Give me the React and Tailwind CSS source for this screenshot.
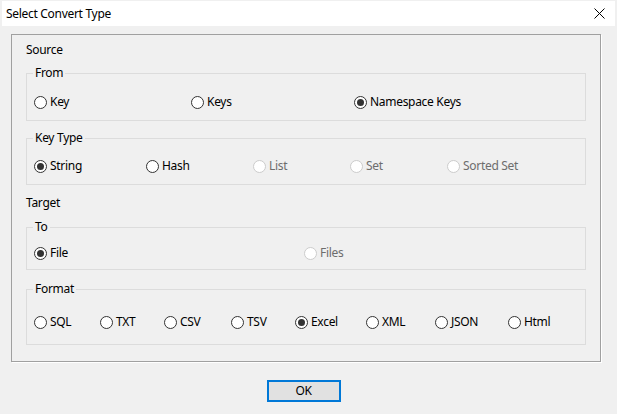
import { useState } from 'react'

const font = { fontFamily: '"Noto Sans", "Liberation Sans", sans-serif' }

function Radio({ label, checked, disabled, width, onSelect }) {
  return (
    <label
      className={`flex items-center h-4 shrink-0 ${disabled ? 'text-[#6d6d6d]' : 'text-black'}`}
      style={width ? { width } : undefined}
      onClick={() => !disabled && onSelect && onSelect()}
    >
      <span
        className={`flex items-center justify-center w-[13px] h-[13px] rounded-full border bg-white ${
          disabled ? 'border-[#cccccc]' : 'border-[#333333]'
        }`}
      >
        {checked && <span className="block w-[7px] h-[7px] rounded-full bg-[#333333]" />}
      </span>
      <span className="ml-[3px] leading-4">{label}</span>
    </label>
  )
}

function Group({ title, className, children }) {
  return (
    <fieldset className={`border border-[#dcdcdc] px-[6px] ${className}`}>
      <legend className="px-[2px] leading-4">{title}</legend>
      {children}
    </fieldset>
  )
}

export default function App() {
  const [from, setFrom] = useState('Namespace Keys')
  const [keyType, setKeyType] = useState('String')
  const [to, setTo] = useState('File')
  const [format, setFormat] = useState('Excel')

  const fromItems = [['Key', 157], ['Keys', 163], ['Namespace Keys']]
  const keyTypes = [['String', 112, false], ['Hash', 107, false], ['List', 97, true], ['Set', 97, true], ['Sorted Set', null, true]]
  const formats = [['SQL', 66], ['TXT', 64], ['CSV', 67], ['TSV', 64], ['Excel', 71], ['XML', 69], ['JSON', 73], ['Html']]

  return (
    <div className="w-[617px] h-[414px] bg-[#f0f0f0] text-[12px] tracking-[-0.3px] text-black overflow-hidden" style={font}>
      {/* Title bar */}
      <div className="mt-px mx-[2px] h-[25px] bg-white flex items-center justify-between pl-[4px] pr-[9px]">
        <span>Select Convert Type</span>
        <svg width="11" height="11" viewBox="0 0 11 11" className="mr-[1px]">
          <path d="M0.5 0.5 L10.5 10.5 M10.5 0.5 L0.5 10.5" stroke="#000" strokeWidth="1" fill="none" />
        </svg>
      </div>

      {/* Main box */}
      <div className="ml-[11px] mt-[8px] w-[590px] h-[328px] border border-[#a0a0a0] shadow-[1px_1px_0_#ffffff] pt-[7px] px-[14px]">
        <div className="leading-4">Source</div>

        <Group title="From" className="mt-[7px] pt-[13px] pb-[10px]">
          <div className="flex pl-px">
            {fromItems.map(([l, w]) => (
              <Radio key={l} label={l} width={w} checked={from === l} onSelect={() => setFrom(l)} />
            ))}
          </div>
        </Group>

        <Group title="Key Type" className="mt-[9px] pt-[12px] pb-[10px]">
          <div className="flex pl-px">
            {keyTypes.map(([l, w, d]) => (
              <Radio key={l} label={l} width={w} disabled={d} checked={keyType === l} onSelect={() => setKeyType(l)} />
            ))}
          </div>
        </Group>

        <div className="leading-4 mt-[10px]">Target</div>

        <Group title="To" className="mt-[8px] pt-[10px] pb-[8px]">
          <div className="flex pl-px">
            <Radio label="File" width={270} checked={to === 'File'} onSelect={() => setTo('File')} />
            <Radio label="Files" disabled checked={to === 'Files'} />
          </div>
        </Group>

        <Group title="Format" className="mt-[11px] pt-[17px] pb-[14px]">
          <div className="flex pl-px">
            {formats.map(([l, w]) => (
              <Radio key={l} label={l} width={w} checked={format === l} onSelect={() => setFormat(l)} />
            ))}
          </div>
        </Group>
      </div>

      {/* Footer */}
      <div className="flex justify-center mt-[18px] pr-[10px]">
        <button className="w-[74px] h-[22px] bg-[#e1e1e1] border-2 border-[#0078d7] leading-4 text-black">
          OK
        </button>
      </div>
    </div>
  )
}
